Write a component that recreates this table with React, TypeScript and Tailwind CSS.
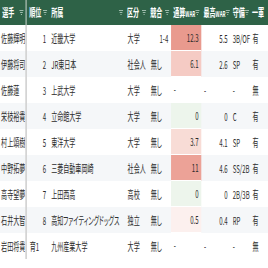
type Row = {
  name: string;
  rank: string;
  team: string;
  kind: string;
  comp: string;
  war: string;
  heat: string;
  peak: string;
  pos: string;
  first: string;
};

const rows: Row[] = [
  { name: "佐藤輝明", rank: "1", team: "近畿大学", kind: "大学", comp: "1-4", war: "12.3", heat: "bg-[#e99a8e]", peak: "5.5", pos: "3B/OF", first: "有" },
  { name: "伊藤将司", rank: "2", team: "JR東日本", kind: "社会人", comp: "無し", war: "6.1", heat: "bg-[#f5cbc4]", peak: "2.6", pos: "SP", first: "有" },
  { name: "佐藤蓮", rank: "3", team: "上武大学", kind: "大学", comp: "無し", war: "-", heat: "", peak: "-", pos: "-", first: "無" },
  { name: "栄枝裕貴", rank: "4", team: "立命館大学", kind: "大学", comp: "無し", war: "0", heat: "bg-[#edf5ec]", peak: "0", pos: "C", first: "有" },
  { name: "村上頌樹", rank: "5", team: "東洋大学", kind: "大学", comp: "無し", war: "3.7", heat: "bg-[#f8dcd6]", peak: "4.1", pos: "SP", first: "有" },
  { name: "中野拓夢", rank: "6", team: "三菱自動車岡崎", kind: "社会人", comp: "無し", war: "11", heat: "bg-[#eca297]", peak: "4.6", pos: "SS/2B", first: "有" },
  { name: "高寺望夢", rank: "7", team: "上田西高", kind: "高校", comp: "無し", war: "0", heat: "bg-[#edf5ec]", peak: "0", pos: "2B/3B", first: "有" },
  { name: "石井大智", rank: "8", team: "高知ファイティングドッグス", kind: "独立", comp: "無し", war: "0.5", heat: "bg-[#fcf0ee]", peak: "0.4", pos: "RP", first: "有" },
  { name: "岩田将貴", rank: "育1", team: "九州産業大学", kind: "大学", comp: "無し", war: "-", heat: "", peak: "-", pos: "-", first: "無" },
];

function FilterIcon() {
  return (
    <svg width="8" height="7" viewBox="0 0 8 7" className="shrink-0">
      <path d="M0 1.5h8M1.5 3.5h5M3 5.5h2" stroke="#9fbcad" strokeWidth="1.2" />
    </svg>
  );
}

function Head({ label, sub, className, filter = true }: { label: string; sub?: string; className: string; filter?: boolean }) {
  return (
    <div className={`flex items-center justify-between pl-[4px] pr-[3px] ${className}`}>
      <span className="whitespace-nowrap">
        {label}
        {sub && <span className="text-[8px]">{sub}</span>}
      </span>
      {filter && <FilterIcon />}
    </div>
  );
}

const num = (v: string) => v !== "-" && !isNaN(Number(v));

export default function App() {
  return (
    <div className="w-[268px] h-[268px] overflow-hidden bg-white">
      <div className="w-[490px] origin-top-left scale-x-[0.55] font-['Noto_Sans_CJK_JP',sans-serif] text-[11px] text-[#2b2b2b] [font-feature-settings:'palt']">
        <div className="flex h-[25px] bg-[#2e6247] text-white font-bold">
          <Head label="選手" className="w-[49px] border-r-[3px] border-[#8fa99a]" />
          <Head label="順位" className="w-[40px]" />
          <Head label="所属" className="w-[138px]" />
          <Head label="区分" className="w-[42px]" />
          <Head label="競合" className="w-[42px]" />
          <Head label="通算" sub="WAR" className="w-[55px]" />
          <Head label="最高" sub="WAR" className="w-[53px]" />
          <Head label="守備" className="w-[35px]" />
          <Head label="一軍" className="flex-1" filter={false} />
        </div>
        {rows.map((r, i) => (
          <div key={r.name} className={`flex h-[26px] ${i % 2 === 1 ? "bg-[#f5f7f9]" : "bg-white"}`}>
            <div className="w-[49px] flex items-end pb-[5px] pl-[2px] border-r-[3px] border-[#d2d2d2] whitespace-nowrap overflow-hidden">
              {r.name}
            </div>
            <div className={`w-[40px] flex items-end pb-[5px] px-[5px] ${num(r.rank) ? "justify-end" : "justify-start"}`}>
              {r.rank}
            </div>
            <div className="w-[138px] flex items-end pb-[5px] pl-[4px] whitespace-nowrap">{r.team}</div>
            <div className="w-[42px] flex items-end pb-[5px] pl-[5px] whitespace-nowrap">{r.kind}</div>
            <div className={`w-[42px] flex items-end pb-[5px] px-[5px] ${r.comp === "無し" ? "justify-start" : "justify-end"}`}>
              {r.comp}
            </div>
            <div className={`w-[55px] flex items-end pb-[5px] px-[5px] border-b border-white ${r.heat} ${num(r.war) ? "justify-end" : "justify-start"}`}>
              {r.war}
            </div>
            <div className={`w-[53px] flex items-end pb-[5px] px-[5px] ${num(r.peak) ? "justify-end" : "justify-start"}`}>
              {r.peak}
            </div>
            <div className="w-[35px] flex items-end pb-[5px] pl-[4px] whitespace-nowrap">{r.pos}</div>
            <div className="flex-1 flex items-end pb-[5px] pl-[5px]">{r.first}</div>
          </div>
        ))}
      </div>
    </div>
  );
}
